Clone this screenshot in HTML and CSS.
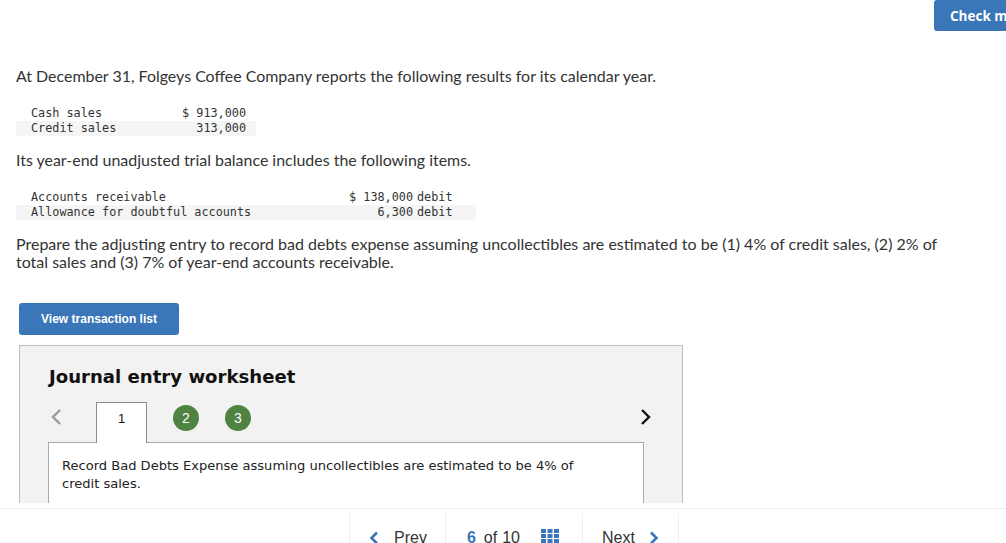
FILE: index.html
```html
<!DOCTYPE html>
<html lang="en">
  <head>
    <meta charset="UTF-8" />
    <title>Journal entry worksheet</title>
    <link rel="stylesheet" href="styles.css">
  </head>
  <body>
    <main>
      <div class="topbar">
        <button class="btn check">Check my work</button>
      </div>

      <p class="intro">At December 31, Folgeys Coffee Company reports the following results for its calendar year.</p>

      <table class="data sales">
        <tr><td class="name">Cash sales</td><td class="num">$ 913,000</td></tr>
        <tr class="alt"><td class="name">Credit sales</td><td class="num">313,000</td></tr>
      </table>

      <p class="intro">Its year-end unadjusted trial balance includes the following items.</p>

      <table class="data trial">
        <tr><td class="name">Accounts receivable</td><td class="num">$ 138,000</td><td class="unit">debit</td></tr>
        <tr class="alt"><td class="name">Allowance for doubtful accounts</td><td class="num">6,300</td><td class="unit">debit</td></tr>
      </table>

      <p class="intro prepare">Prepare the adjusting entry to record bad debts expense assuming uncollectibles are estimated to be (1) 4% of credit sales, (2) 2% of total sales and (3) 7% of year-end accounts receivable.</p>

      <button class="btn view">View transaction list</button>

      <section class="worksheet">
        <h2>Journal entry worksheet</h2>
        <div class="tabs">
          <svg class="arrow left" width="12" height="18" viewBox="0 0 12 18"><path d="M10 2 3 9l7 7" fill="none" stroke="#999" stroke-width="2.4"/></svg>
          <div class="tab">1</div>
          <div class="step">2</div>
          <div class="step">3</div>
          <svg class="arrow right" width="12" height="18" viewBox="0 0 12 18"><path d="M2 2l7 7-7 7" fill="none" stroke="#111" stroke-width="2.4"/></svg>
        </div>
        <div class="task">Record Bad Debts Expense assuming uncollectibles are estimated to be 4% of credit sales.</div>
      </section>
    </main>

    <footer>
      <div class="pager">
        <div class="cell prev">
          <svg width="10" height="14" viewBox="0 0 10 14"><path d="M8 1.5 2.5 7 8 12.5" fill="none" stroke="#3b76b9" stroke-width="2.6"/></svg>
          <span>Prev</span>
        </div>
        <div class="cell count">
          <span><b>6</b> of 10</span>
          <svg width="18" height="14" viewBox="0 0 18 14" fill="#3b76b9">
            <rect x="0" y="0" width="5" height="4"/><rect x="6.5" y="0" width="5" height="4"/><rect x="13" y="0" width="5" height="4"/>
            <rect x="0" y="5" width="5" height="4"/><rect x="6.5" y="5" width="5" height="4"/><rect x="13" y="5" width="5" height="4"/>
            <rect x="0" y="10" width="5" height="4"/><rect x="6.5" y="10" width="5" height="4"/><rect x="13" y="10" width="5" height="4"/>
          </svg>
        </div>
        <div class="cell next">
          <span>Next</span>
          <svg width="10" height="14" viewBox="0 0 10 14"><path d="M2 1.5 7.5 7 2 12.5" fill="none" stroke="#3b76b9" stroke-width="2.6"/></svg>
        </div>
      </div>
    </footer>
  </body>
</html>
```

FILE: styles.css
```css
html,
body {
  margin: 0;
  padding: 0;
  height: 543px;
  overflow: hidden;
  background: #fff;
}

body {
  font-family: "Lato", "Liberation Sans", sans-serif;
  color: #333;
  display: flex;
  flex-direction: column;
}

main {
  height: 503px;
  overflow: hidden;
  flex-shrink: 0;
}

.topbar {
  height: 31px;
  margin-bottom: 35px;
  display: flex;
  justify-content: flex-end;
}

.btn {
  background: #3b76b9;
  color: #fff;
  border: none;
  border-radius: 3px;
  font-family: "Liberation Sans", sans-serif;
  font-weight: bold;
  cursor: pointer;
  padding: 0;
}

.check {
  width: 136px;
  height: 31px;
  flex-shrink: 0;
  margin-right: -64px;
  text-align: left;
  padding-left: 16px;
  font-family: "Open Sans", sans-serif;
  font-size: 13.5px;
}

.intro {
  margin: 0 0 0 16px;
  font-size: 15.95px;
  line-height: 20px;
  width: 930px;
}

.data {
  border-collapse: collapse;
  margin: 20px 0 14px 16px;
  font-family: "DejaVu Sans Mono", monospace;
  font-size: 11.8px;
  line-height: 15px;
  color: #333;
}

.data td {
  padding: 0;
  white-space: nowrap;
}

.data .alt {
  background: #f5f5f5;
}

.data .name {
  padding-left: 15px;
}

.data .num {
  text-align: right;
}

.sales .name {
  width: 150px;
}

.sales .num {
  width: 65px;
  padding-right: 10px;
}

.trial .name {
  width: 317px;
}

.trial .num {
  width: 65px;
}

.trial .unit {
  width: 59px;
  padding-left: 4px;
}

.prepare {
  font-size: 16px;
  line-height: 18px;
  margin-top: 15px;
  width: 935px;
}

.view {
  display: block;
  width: 160px;
  height: 32px;
  margin: 32px 0 10px 19px;
  font-size: 12px;
}

.worksheet {
  width: 596px;
  height: 200px;
  margin-left: 19px;
  background: #f2f2f2;
  border: 1px solid #bfbfbf;
  padding: 0 38px 0 28px;
}

.worksheet h2 {
  margin: 18px 0 12px 1px;
  font-family: "DejaVu Sans", sans-serif;
  font-size: 18.1px;
  line-height: 25px;
  color: #111;
}

.tabs {
  display: flex;
  align-items: center;
  height: 41px;
}

.arrow.left {
  margin-right: 34px;
  margin-left: 2px;
  margin-top: -10px;
}

.arrow.right {
  margin-left: auto;
  margin-top: -10px;
  margin-right: -8px;
}

.tab {
  width: 49px;
  height: 40px;
  align-self: flex-end;
  background: #fff;
  border: 1px solid #8c8c8c;
  border-bottom: none;
  font-family: "Liberation Sans", sans-serif;
  font-size: 13px;
  line-height: 31px;
  text-align: center;
  color: #111;
  margin-right: 26px;
  margin-bottom: -1px;
  position: relative;
  z-index: 1;
}

.step {
  width: 26px;
  height: 26px;
  border-radius: 50%;
  background: #4f8341;
  color: #fff;
  font-family: "Liberation Sans", sans-serif;
  font-size: 14px;
  line-height: 26px;
  text-align: center;
  margin-right: 26px;
  margin-top: -8px;
}

.task {
  background: #fff;
  border: 1px solid #aaa;
  width: 541px;
  height: 100px;
  padding: 14px 40px 13px 13px;
  font-family: "DejaVu Sans", sans-serif;
  font-size: 13.05px;
  line-height: 18px;
  color: #222;
}

footer {
  margin-top: 5px;
  border-top: 1px solid #eee;
  flex-grow: 1;
  display: flex;
  padding-left: 349px;
  padding-top: 5px;
}

.pager {
  display: flex;
  font-family: "Liberation Sans", sans-serif;
  font-size: 16px;
  color: #333;
}

.cell {
  height: 40px;
  border-left: 1px solid #eee;
  display: flex;
  align-items: flex-start;
  padding-top: 11px;
  box-sizing: border-box;
  line-height: 26px;
}

.cell svg {
  margin-top: 6px;
}

.prev {
  width: 96px;
  padding-left: 19px;
  gap: 15px;
}

.count {
  width: 137px;
  padding-left: 21px;
  gap: 21px;
  word-spacing: 0.5px;
}

.count b {
  color: #3b76b9;
  margin-right: 3px;
}

.count svg {
  margin-top: 4px;
}

.next {
  width: 97px;
  padding-left: 19px;
  gap: 14px;
  border-right: 1px solid #eee;
}
```
